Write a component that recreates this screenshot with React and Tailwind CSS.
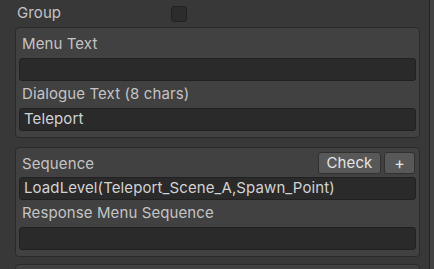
export default function App() {
  const font = { fontFamily: 'Inter, "Noto Sans", sans-serif' };
  const Field = ({ children }) => (
    <div className="h-[23px] rounded-[3px] border border-[#212121] bg-[#2a2a2a] px-[4px] flex items-center text-[15px] tracking-[0.1px] text-[#d2d2d2] whitespace-nowrap overflow-hidden">
      {children}
    </div>
  );
  const Label = ({ children, h = "h-[27px]" }) => (
    <div className={`${h} flex items-center pl-[3px] text-[15px] tracking-[0.1px] text-[#c4c4c4] whitespace-nowrap`}>{children}</div>
  );
  return (
    <div className="w-[434px] h-[269px] overflow-hidden bg-[#383838] flex" style={font}>
      <div className="w-[429px] pl-[15px] pr-[9px]">
        <div className="h-[27px] flex items-center">
          <div className="w-[156px] pl-[2px] text-[15px] tracking-[0.1px] text-[#c4c4c4]">Group</div>
          <div className="w-[16px] h-[16px] rounded-[3px] border border-[#212121] bg-[#2c2c2c]" />
        </div>
        <div className="rounded-[4px] border border-[#2a2a2a] bg-[#414141] px-[3px] pt-[3px] pb-[6px]">
          <Label>Menu Text</Label>
          <Field />
          <Label>Dialogue Text (8 chars)</Label>
          <Field>Teleport</Field>
        </div>
        <div className="mt-[9px] rounded-[4px] border border-[#2a2a2a] bg-[#414141] px-[3px] pt-[3px] pb-[6px]">
          <div className="h-[26px] flex items-start justify-between">
            <div className="h-[26px] flex items-center pl-[3px] text-[15px] tracking-[0.1px] text-[#c4c4c4]">Sequence</div>
            <div className="flex gap-[3px] pt-[1px] pr-[1px]">
              <div className="w-[63px] h-[22px] rounded-[3px] border border-[#303030] bg-[#585858] flex items-center justify-center text-[15px] tracking-[0.1px] text-[#e4e4e4]">Check</div>
              <div className="w-[31px] h-[22px] rounded-[3px] border border-[#303030] bg-[#585858] flex items-center justify-center text-[16px] text-[#e4e4e4]">+</div>
            </div>
          </div>
          <Field>LoadLevel(Teleport_Scene_A,Spawn_Point)</Field>
          <Label>Response Menu Sequence</Label>
          <Field />
        </div>
        <div className="mt-[7px] h-[40px] rounded-[4px] border border-[#2a2a2a] bg-[#414141]" />
      </div>
      <div className="w-[5px] h-full border-l border-[#232323] bg-[#424242]" />
    </div>
  );
}
